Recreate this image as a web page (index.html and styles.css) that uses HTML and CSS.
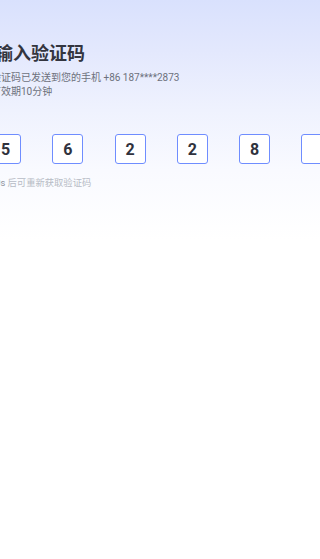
FILE: index.html
```html
<!DOCTYPE html>
<html lang="zh-CN">
<head>
<meta charset="utf-8">
<meta name="viewport" content="width=device-width, initial-scale=1">
<title>输入验证码</title>
<link rel="stylesheet" href="styles.css">
</head>
<body>
<div class="page">
  <div class="content">
    <h1 class="title">请输入验证码</h1>
    <p class="desc">验证码已发送到您的手机 +86 187****2873<br>有效期10分钟</p>
    <div class="code-row">
      <div class="code-box">5</div>
      <div class="code-box">6</div>
      <div class="code-box">2</div>
      <div class="code-box">2</div>
      <div class="code-box">8</div>
      <div class="code-box"></div>
    </div>
    <p class="countdown"><span class="sec">60s</span> 后可重新获取验证码</p>
  </div>
</div>
</body>
</html>
```
FILE: styles.css
```css
html, body {
  margin: 0;
  padding: 0;
}
body {
  width: 320px;
  height: 559px;
  overflow: hidden;
  background: #ffffff;
  font-family: Roboto, "Noto Sans CJK SC", sans-serif;
}
.page {
  height: 559px;
  background: linear-gradient(180deg, #d9e1fd 0px, #e3e8fd 50px, #eff2fe 110px, #f9faff 170px, #ffffff 240px);
  padding-top: 40px;
  box-sizing: border-box;
}
.content {
  margin-left: -10px;
  width: 360px;
}
.title {
  margin: 0 0 0 -13px;
  font-family: "Noto Sans CJK SC", sans-serif;
  font-size: 18px;
  line-height: 24px;
  font-weight: 700;
  color: #33353f;
}
.desc {
  margin: 7px 0 0 1px;
  font-size: 10px;
  line-height: 14px;
  color: #6d717c;
}
.code-row {
  display: flex;
  gap: 31.25px;
  margin-top: 35px;
}
.code-box {
  box-sizing: border-box;
  width: 31px;
  height: 30px;
  border: 1px solid #6f8dff;
  border-radius: 3px;
  background: #ffffff;
  display: flex;
  align-items: center;
  justify-content: center;
  font-size: 16px;
  font-weight: 700;
  color: #30323d;
}
.countdown {
  margin: 12px 0 0 0;
  font-size: 9.3px;
  line-height: 14px;
  color: #b7bbc5;
}
.sec {
  color: #8b909b;
}
```
